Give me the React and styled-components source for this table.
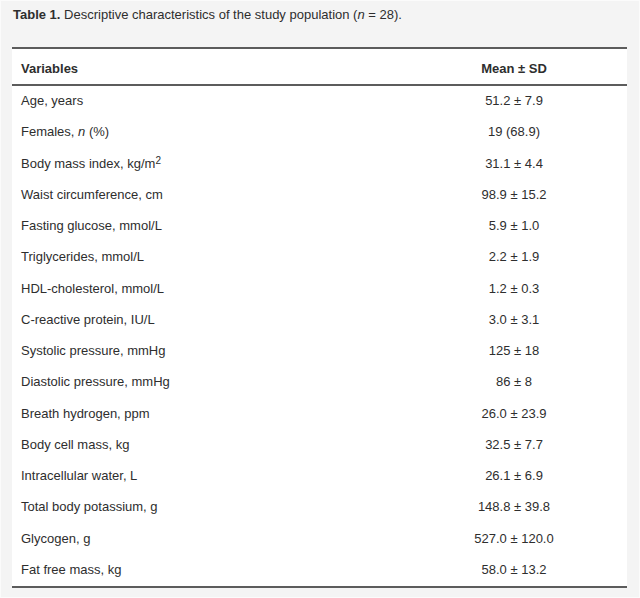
import React from "react";
import styled, { createGlobalStyle } from "styled-components";

const GlobalStyle = createGlobalStyle`
  body {
    margin: 0;
    font-family: "Liberation Sans", Arial, sans-serif;
    color: #2e2e2e;
  }
`;

const Frame = styled.div`
  box-sizing: border-box;
  width: 640px;
  height: 598px;
  background: #f4f4f4;
  border: 1px solid #fbfbfb;
  padding: 6px 12px 0 11px;
`;

const Caption = styled.div`
  font-size: 13px;
  line-height: 15px;
  margin-left: 1px;
  height: 40px;
`;

const Panel = styled.div`
  background: #fff;
  border-top: 2px solid #5c5c5c;
  border-bottom: 2px solid #5c5c5c;
  font-size: 13px;
  line-height: 15px;
`;

const Row = styled.div`
  display: grid;
  grid-template-columns: 1fr 226px;
  box-sizing: border-box;
  height: 31.25px;
  padding-top: 7px;
`;

const HeadRow = styled(Row)`
  height: 37px;
  padding-top: 12px;
  font-weight: bold;
  border-bottom: 2px solid #5c5c5c;
`;

const Cell = styled.div`
  padding: 0 9px;
  text-align: ${(p) => (p.$center ? "center" : "left")};
  white-space: nowrap;
`;

const Sup = styled.sup`
  font-size: 10px;
  line-height: 0;
  vertical-align: 4px;
`;

// variable name, mean ± SD
const rows = [
  ["Age, years", "51.2 ± 7.9"],
  [<>Females, <i>n</i> (%)</>, "19 (68.9)"],
  [<>Body mass index, kg/m<Sup>2</Sup></>, "31.1 ± 4.4"],
  ["Waist circumference, cm", "98.9 ± 15.2"],
  ["Fasting glucose, mmol/L", "5.9 ± 1.0"],
  ["Triglycerides, mmol/L", "2.2 ± 1.9"],
  ["HDL-cholesterol, mmol/L", "1.2 ± 0.3"],
  ["C-reactive protein, IU/L", "3.0 ± 3.1"],
  ["Systolic pressure, mmHg", "125 ± 18"],
  ["Diastolic pressure, mmHg", "86 ± 8"],
  ["Breath hydrogen, ppm", "26.0 ± 23.9"],
  ["Body cell mass, kg", "32.5 ± 7.7"],
  ["Intracellular water, L", "26.1 ± 6.9"],
  ["Total body potassium, g", "148.8 ± 39.8"],
  ["Glycogen, g", "527.0 ± 120.0"],
  ["Fat free mass, kg", "58.0 ± 13.2"],
];

const App = () => {
  return (
    <>
      <GlobalStyle />
      <Frame>
        <Caption>
          <b>Table 1.</b> Descriptive characteristics of the study population (<i>n</i> = 28).
        </Caption>
        <Panel>
          <HeadRow>
            <Cell>Variables</Cell>
            <Cell $center>Mean ± SD</Cell>
          </HeadRow>
          {rows.map((r, i) => (
            <Row key={i}>
              <Cell>{r[0]}</Cell>
              <Cell $center>{r[1]}</Cell>
            </Row>
          ))}
        </Panel>
      </Frame>
    </>
  );
};

export default App;
